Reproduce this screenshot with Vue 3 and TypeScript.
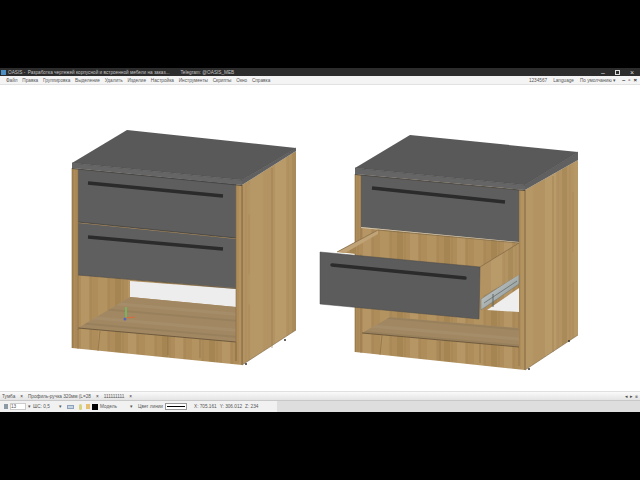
<template>
  <div class="screen">
    <div class="letterbox top-band"></div>
    <div class="window">
      <div class="titlebar">
        <span class="app-icon"></span>
        <span class="title">OASIS -&nbsp; Разработка чертежей корпусной и встроенной мебели на заказ...</span>
        <span class="telegram">Telegram: @OASIS_MEB</span>
        <span class="win-buttons">
          <span>–</span><span class="win-square"></span><span>×</span>
        </span>
      </div>
      <div class="menubar">
        <span v-for="item in menu" :key="item">{{ item }}</span>
        <span class="menu-right">
          <span>1234567</span>
          <span>Language</span>
          <span>По умолчанию ▾</span>
          <span class="doc-buttons"><b>–</b><b>▫</b><b>×</b></span>
        </span>
      </div>
      <svg class="canvas" viewBox="0 85 640 306" width="640" height="306">
        <defs>
          <pattern id="grain-front" width="47" height="70" patternUnits="userSpaceOnUse">
            <rect width="47" height="70" fill="#ae8d5b" />
            <rect x="4" width="9" height="70" fill="#b39360" />
            <rect x="21" width="6" height="70" fill="#a58551" />
            <rect x="34" width="8" height="70" fill="#b59664" />
            <path d="M15 0V70M29 0V70M44 0V70" stroke="#8b6c42" stroke-width=".5" opacity=".5" />
          </pattern>
          <pattern id="grain-side" width="54" height="90" patternUnits="userSpaceOnUse" patternTransform="skewY(-32)">
            <rect width="54" height="90" fill="#b39362" />
            <rect x="5" width="11" height="90" fill="#b99a69" />
            <rect x="22" width="5" height="90" fill="#a98a59" />
            <rect x="34" width="13" height="90" fill="#b69766" />
            <path d="M18 0V90M30 0V90M33 10V70" stroke="#8f7145" stroke-width=".5" opacity=".5" />
          </pattern>
          <pattern id="grain-shelf" width="90" height="16" patternUnits="userSpaceOnUse" patternTransform="rotate(5)">
            <rect width="90" height="16" fill="#a18863" />
            <rect y="3" width="90" height="3" fill="#a68d69" />
            <rect y="10" width="90" height="2" fill="#98805c" />
          </pattern>
          <linearGradient id="rail" x1="0" y1="0" x2="1" y2="1">
            <stop offset="0" stop-color="#d5d9d9" />
            <stop offset="1" stop-color="#7f8888" />
          </linearGradient>
        </defs>

        <!-- левая тумба, ящики закрыты -->
        <g>
          <polygon points="242,185 296,151 296,330 242,365" fill="url(#grain-side)" />
          <path d="M272 168V348" stroke="#96774a" stroke-width=".6" />
          <polygon points="72,168 242,185 242,365 72,348" fill="url(#grain-front)" />
          <polygon points="78,270 130,276 130,297 78,328" fill="url(#grain-front)" />
          <polygon points="130,281 236,289 236,307 130,297" fill="#ededed" />
          <polygon points="130,297 236,307 236,342 78,328" fill="url(#grain-shelf)" />
          <path d="M78 328L236 342" stroke="#6f5a3d" stroke-width="1" />
          <path d="M78 329L78 349M236 342V361M100 331L98 351M168 336V355M200 339V358" stroke="#86683f" stroke-width=".6" />
          <polygon points="78,169 236,184 236,238 78,222" fill="#5e5e5e" />
          <polygon points="78,223 236,239 236,288 78,275" fill="#5f5f5f" />
          <path d="M78 222L236 238" stroke="#3f3f3f" stroke-width=".8" />
          <path d="M78 275L236 288.500" stroke="#4a4a4a" stroke-width=".6" />
          <path d="M88 183L223 196" stroke="#2b2b2b" stroke-width="3.500" />
          <path d="M88 237L223 249" stroke="#2b2b2b" stroke-width="3.500" />
          <path d="M72 168V348M78 170V330M236 184V361M242 185V365" stroke="#86683f" stroke-width=".6" />
          <path d="M242 185V365L296 330" fill="none" stroke="#7f6844" stroke-width=".6" />
          <polygon points="72,163 127,130 296,148 242,180" fill="#595959" />
          <polygon points="72,163 242,180 242,185 72,168" fill="#656565" />
          <polygon points="242,180 296,148 296,151 242,185" fill="#606060" />
          <path d="M72 163L242 180L296 148" fill="none" stroke="#484848" stroke-width=".6" />
          <path d="M72 168.500L242 185.500" stroke="#3f3f3f" stroke-width=".8" />
          <path d="M246 363v2M285 339v2" stroke="#333" stroke-width="1.500" />
          <path d="M126 319V307" stroke="#7ab35f" stroke-width="2" />
          <path d="M126 318l9-1" stroke="#d96a3c" stroke-width="1" />
          <circle cx="125" cy="319" r="1.500" fill="#5966b8" />
        </g>

        <!-- правая тумба, нижний ящик выдвинут -->
        <g>
          <polygon points="525,190 578,160 578,335 525,370" fill="url(#grain-side)" />
          <path d="M553 176V352" stroke="#96774a" stroke-width=".6" />
          <polygon points="355,174 525,190 525,370 355,352" fill="url(#grain-front)" />
          <path d="M355 174V352M361 175V353M519 190V366M525 190V370" stroke="#86683f" stroke-width=".6" />
          <polygon points="487,310 519,288 519,312" fill="#eeeeee" />
          <polygon points="390,317 519,328 519,347 362,333" fill="url(#grain-shelf)" />
          <path d="M362 333L519 347" stroke="#6f5a3d" stroke-width="1" />
          <path d="M382 335L380 355M440 341V360M480 344V363" stroke="#86683f" stroke-width=".6" />
          <polygon points="361,175 519,190 519,242 361,227" fill="#5e5e5e" />
          <path d="M361 227.500L519 242.500" stroke="#d8d3c6" stroke-width=".8" />
          <polygon points="481,299 519,274 519,284 481,310" fill="url(#rail)" stroke="#6c7474" stroke-width=".5" />
          <path d="M484 303L517 281" stroke="#596161" stroke-width=".7" />
          <path d="M493 294v13" stroke="#5e6666" stroke-width="1" />
          <polygon points="337,252 378,230 519,243 480,267" fill="url(#grain-front)" />
          <polygon points="337,252 378,230 378,234 345,253" fill="#c0a376" />
          <polygon points="480,267 519,243 519,275 481,297" fill="url(#grain-side)" />
          <path d="M337 252L378 230L519 243L480 267" fill="none" stroke="#7f6844" stroke-width=".7" />
          <polygon points="320,252 480,267 479,319 320,304" fill="#5c5c5c" stroke="#484848" stroke-width=".5" />
          <path d="M332 265L465 278" stroke="#2b2b2b" stroke-width="3.500" stroke-linecap="round" />
          <path d="M372 188L505 202" stroke="#2b2b2b" stroke-width="3.500" />
          <path d="M525 190V370L578 335" fill="none" stroke="#7f6844" stroke-width=".6" />
          <polygon points="355,168 410,135 578,152 525,185" fill="#595959" />
          <polygon points="355,168 525,185 525,190 355,174" fill="#656565" />
          <polygon points="525,185 578,152 578,160 525,190" fill="#606060" />
          <path d="M355 168L525 185L578 152" fill="none" stroke="#484848" stroke-width=".6" />
          <path d="M355 174.500L525 190.500" stroke="#3f3f3f" stroke-width=".8" />
          <path d="M529 368v2M569 340v2" stroke="#333" stroke-width="1.500" />
        </g>
      </svg>
      <div class="tabstrip">
        <span class="tab">Тумба</span>
        <span class="tab-x">×</span>
        <span>Профиль-ручка 320мм (L=28</span>
        <span class="tab-x">×</span>
        <span>111111111</span>
        <span class="tab-x">×</span>
        <span class="tab-nav">◂ ▸ &nbsp;≡</span>
      </div>
      <div class="statusbar">
        <div class="status-left">
          <span class="layer-icon"></span>
          <span class="field">13</span>
          <span class="spin">▾</span>
          <span class="weight">ШС: 0,5</span>
          <span class="drop">▾</span>
          <span class="tool-icon"></span>
          <span class="bulb"></span>
          <span class="lock"></span>
          <span class="swatch"></span>
          <span class="model">Модель</span>
          <span class="drop">▾</span>
          <span>Цвет линии</span>
          <span class="line-box"><i></i></span>
          <span class="coords">X: 705.161</span>
          <span>Y: 306.012</span>
          <span>Z: 234</span>
        </div>
      </div>
    </div>
    <div class="letterbox bottom-band"></div>
  </div>
</template>

<script setup lang="ts">
const menu: string[] = [
  'Файл',
  'Правка',
  'Группировка',
  'Выделение',
  'Удалить',
  'Изделие',
  'Настройка',
  'Инструменты',
  'Скрипты',
  'Окно',
  'Справка'
]
</script>

<style>
html,
body {
  margin: 0;
  background: #000;
}
</style>

<style scoped>
.screen {
  width: 640px;
  height: 480px;
  display: flex;
  flex-direction: column;
  overflow: hidden;
  background: #000;
  font-family: "Liberation Sans", Arial, sans-serif;
  font-size: 4.7px;
  white-space: nowrap;
  color: #555;
}

.top-band {
  height: 68px;
}

.bottom-band {
  flex: 1;
}

.window {
  display: flex;
  flex-direction: column;
}

.titlebar {
  height: 8px;
  display: flex;
  align-items: center;
  background: #2c2c2c;
  color: #c4c4c4;
  padding-left: 1px;
}

.app-icon {
  width: 5px;
  height: 5px;
  background: #4b8fc4;
  margin-right: 2px;
}

.telegram {
  margin-left: 11px;
}

.win-buttons {
  margin-left: auto;
  display: flex;
  align-items: center;
  gap: 10px;
  padding-right: 6px;
  font-size: 7px;
  color: #ddd;
}

.win-square {
  width: 3px;
  height: 3px;
  border: 1px solid #ddd;
}

.menubar {
  height: 9px;
  box-sizing: border-box;
  display: flex;
  align-items: center;
  gap: 4.8px;
  padding-left: 6px;
  background: #f4f4f4;
  border-bottom: 1px solid #e2e2e2;
}

.menu-right {
  margin-left: auto;
  display: flex;
  align-items: center;
  gap: 6px;
  padding-right: 3px;
}

.doc-buttons {
  display: flex;
  gap: 3px;
  color: #222;
  font-size: 6px;
}

.canvas {
  display: block;
  background: #fff;
}

.tabstrip {
  height: 10px;
  box-sizing: border-box;
  display: flex;
  align-items: center;
  padding-left: 2px;
  background: linear-gradient(#fafafa, #e4e4e4);
  border-top: 1px solid #e0e0e0;
  border-bottom: 1px solid #c8c8c8;
}

.tab-x {
  margin: 0 5px;
  color: #333;
}

.tab-nav {
  margin-left: auto;
  padding-right: 2px;
  color: #444;
}

.statusbar {
  height: 11px;
  background: #dedede;
  display: flex;
}

.status-left {
  width: 277px;
  display: flex;
  align-items: center;
  padding-left: 4px;
  box-sizing: border-box;
  background: #f1f1f1;
}

.layer-icon {
  width: 4px;
  height: 5px;
  background: #8c9aa6;
  margin-right: 2px;
}

.field {
  width: 16px;
  height: 7px;
  background: #fff;
  border: 1px solid #ccc;
  box-sizing: border-box;
  line-height: 5px;
}

.spin {
  width: 7px;
  text-align: center;
}

.weight {
  width: 20px;
}

.drop {
  width: 14px;
  text-align: center;
}

.tool-icon {
  width: 7px;
  height: 4px;
  background: #c5d3e3;
  border: 1px solid #8ea3ba;
  box-sizing: border-box;
  margin-right: 5px;
}

.bulb {
  width: 3px;
  height: 6px;
  border-radius: 2px;
  background: #d8d27a;
  margin-right: 4px;
}

.lock {
  width: 4px;
  height: 5px;
  background: #e6bf73;
  margin-right: 2px;
}

.swatch {
  width: 6px;
  height: 6px;
  background: #000;
  margin-right: 2px;
}

.model {
  width: 24px;
}

.line-box {
  width: 22px;
  height: 7px;
  margin-left: 2px;
  background: #fff;
  border: 1px solid #999;
  box-sizing: border-box;
  display: flex;
  align-items: center;
  padding: 0 1px;
}

.line-box i {
  display: block;
  width: 100%;
  height: 1px;
  background: #000;
}

.coords {
  margin-left: 7px;
  margin-right: 3px;
}

.coords + span {
  margin-right: 3px;
}
</style>
